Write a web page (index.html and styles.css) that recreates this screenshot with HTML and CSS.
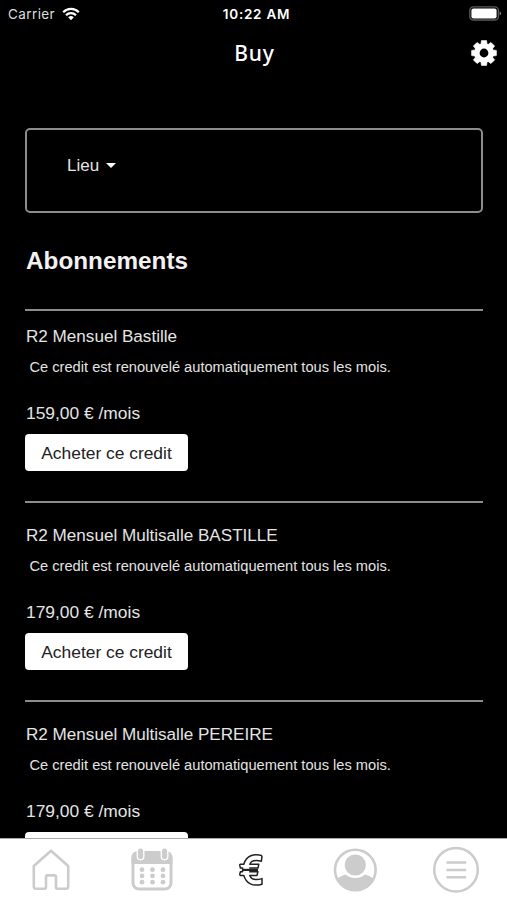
FILE: index.html
```
<!DOCTYPE html>
<html lang="fr">
<head>
<meta charset="utf-8">
<title>Buy</title>
<link rel="stylesheet" href="styles.css">
</head>
<body>
<div class="status">
  <div class="carrier"><span>Carrier</span>
    <svg width="18" height="14" viewBox="0 0 18 14" fill="none" stroke="#fff" stroke-width="2.2"><path d="M1.2 5.2a11 11 0 0 1 15.6 0M4 8.2a7 7 0 0 1 10 0"/><path d="M9 13.2 6.2 10.3a4 4 0 0 1 5.6 0z" fill="#fff" stroke="none"/></svg>
  </div>
  <div class="time">10:22 AM</div>
  <svg class="battery" width="33" height="15" viewBox="0 0 33 15"><rect x=".8" y=".8" width="28.6" height="13.2" rx="3.6" fill="none" stroke="#5c5c5c" stroke-width="1.3"/><rect x="2.4" y="2.4" width="25.2" height="10" rx="2" fill="#fff"/><path d="M30.6 5.2q1.5.6 1.5 2.2t-1.5 2.2z" fill="#777"/></svg>
</div>
<header class="header">
  <span></span>
  <h1>Buy</h1>
  <svg class="gear" width="26" height="26" viewBox="-13 -13 26 26" fill="#fff">
    <defs><path id="tooth" d="M-3.2-8-2.6-12.4H2.600L3.200-8z" stroke="#fff" stroke-linejoin="round" stroke-width=".6"/></defs>
    <circle r="7.100" fill="none" stroke="#fff" stroke-width="5.400"/>
    <use href="#tooth"/><use href="#tooth" transform="rotate(45)"/><use href="#tooth" transform="rotate(90)"/><use href="#tooth" transform="rotate(135)"/><use href="#tooth" transform="rotate(180)"/><use href="#tooth" transform="rotate(225)"/><use href="#tooth" transform="rotate(270)"/><use href="#tooth" transform="rotate(315)"/>
  </svg>
</header>
<main class="content">
  <div class="filter"><span>Lieu</span><i class="caret"></i></div>
  <h2>Abonnements</h2>
  <section class="plan first">
    <h3>R2 Mensuel Bastille</h3>
    <p class="desc">Ce credit est renouvelé automatiquement tous les mois.</p>
    <p class="price">159,00 € /mois</p>
    <button>Acheter ce credit</button>
  </section>
  <section class="plan">
    <h3>R2 Mensuel Multisalle BASTILLE</h3>
    <p class="desc">Ce credit est renouvelé automatiquement tous les mois.</p>
    <p class="price">179,00 € /mois</p>
    <button>Acheter ce credit</button>
  </section>
  <section class="plan">
    <h3>R2 Mensuel Multisalle PEREIRE</h3>
    <p class="desc">Ce credit est renouvelé automatiquement tous les mois.</p>
    <p class="price">179,00 € /mois</p>
    <button aria-label="Acheter ce credit"></button>
  </section>
</main>
<nav class="tabs">
  <a><svg width="48" height="48" viewBox="0 0 48 48" fill="none" stroke="#ccc" stroke-width="2.6" stroke-linejoin="round"><path d="M24 4.8 6.8 20v20.500q0 2.200 2.200 2.200h8.600q1.400 0 1.400-1.400V31q0-1.600 1.600-1.600h6.800Q29 29.400 29 31v10.300q0 1.400 1.400 1.400H39q2.200 0 2.200-2.200V20z"/></svg></a>
  <a><svg width="48" height="48" viewBox="0 0 48 48"><rect x="5" y="6.500" width="38" height="36.500" rx="6" fill="none" stroke="#ccc" stroke-width="3"/><path d="M3.500 18v-6q0-7 7-7h27q7 0 7 7v6z" fill="#ccc"/><g fill="#ccc" stroke="#fff" stroke-width="1.300"><rect x="9.300" y="1.800" width="6.500" height="12" rx="3.200"/><rect x="33.300" y="1.800" width="6.500" height="12" rx="3.200"/></g><g fill="#ccc"><circle cx="14" cy="23.700" r="2.400"/><circle cx="24.500" cy="23.700" r="2.400"/><circle cx="35" cy="23.700" r="2.400"/><circle cx="14" cy="29.900" r="2.400"/><circle cx="24.500" cy="29.900" r="2.400"/><circle cx="35" cy="29.900" r="2.400"/><circle cx="14" cy="36.200" r="2.400"/><circle cx="24.500" cy="36.200" r="2.400"/><circle cx="35" cy="36.200" r="2.400"/></g></svg></a>
  <a><svg width="48" height="48" viewBox="0 0 48 48" fill="none" stroke="#222" stroke-width="1.500" stroke-linejoin="round"><path d="M33 9.600C25 7 17.200 9.800 14.800 18.200H11.600q-1 0-.8 1.200l.6 2.600h2.200v3.800h-2.200l-.6 2.400q-.1 1.200.8 1.200h3.200C17 37.500 24 40.800 33 38.200V32.600C27.500 34.200 22.500 34 20.800 29.400H28l.9-3.600H20.200"/><path d="M20.200 22H29l.8-3.800H20.800C22.500 13.800 26.500 13.800 32.400 15.200L33 9.600"/><path d="M13 23.900H29" stroke-width="2.200"/></svg></a>
  <a><svg width="48" height="48" viewBox="0 0 48 48"><circle cx="24.300" cy="24" r="20.300" fill="none" stroke="#ccc" stroke-width="2.600"/><circle cx="24.300" cy="19" r="10.600" fill="#ccc"/><path d="M6 33q2-2.500 8.500-4.500 4.200 3.500 9.800 3.500t9.800-3.500Q40.600 30.500 42.600 33 37 45 24.300 45T6 33z" fill="#ccc"/></svg></a>
  <a><svg width="48" height="48" viewBox="0 0 48 48" fill="none" stroke="#ccc" stroke-width="2.500"><circle cx="24" cy="23.800" r="21.800"/><path d="M14.500 16.600h19.700M14.500 24h19.700M14.500 31.200h19.700"/></svg></a>
</nav>
</body>
</html>
```
FILE: styles.css
```
* { box-sizing: border-box; margin: 0; padding: 0; }
body {
  width: 507px; height: 900px; overflow: hidden;
  display: flex; flex-direction: column;
  background: #000; color: #e4e4e4;
  font-family: "Liberation Sans", Arial, sans-serif;
}
.status, .header {
  display: grid; grid-template-columns: 1fr auto 1fr;
  align-items: center; flex: none;
}
.status { height: 27px; padding: 0 6px 0 8px; font: 13.5px/16px Inter, sans-serif; color: #fff; }
.carrier { display: flex; align-items: center; gap: 7px; color: #ddd; letter-spacing: .4px; }
.time { font-weight: 600; font-size: 13.5px; letter-spacing: .75px; margin-left: 4px; }
.battery { justify-self: end; margin-right: -1px; }
.header { height: 51px; padding: 0 10px 0 12px; color: #fff; }
.header h1 { font: 500 21px/26px "Noto Sans", sans-serif; letter-spacing: .8px; }
.gear { justify-self: end; }
.content { flex: 1; min-height: 0; overflow: hidden; padding: 50px 24px 0 25px; }
.filter {
  height: 85px; border: 2px solid #8c8c8c; border-radius: 5px;
  display: flex; align-items: flex-start; gap: 7px;
  padding: 26px 40px; font-size: 17px; line-height: 20px;
}
.caret { margin-top: 7px; border: 5px solid transparent; border-top-color: #fff; border-bottom: 0; }
h2 { font-size: 24.3px; line-height: 30px; margin: 33px 0 33px; color: #f2f2f2; padding-left: 1px; }
.plan { height: 199px; border-top: 2px solid #8c8c8c; padding-top: 23px; }
.plan.first { height: 192px; padding-top: 16px; }
.plan h3 { font-weight: 400; font-size: 17.1px; line-height: 20px; padding-left: 1px; }
.desc { font-size: 14.65px; line-height: 18px; margin-top: 11px; padding-left: 4.5px; }
.price { font-size: 17.4px; line-height: 20px; margin-top: 27px; padding-left: 1px; }
button {
  display: block; width: 163px; height: 37px; margin-top: 11px;
  border: 0; border-radius: 4px; background: #fff; color: #222;
  font: 17.4px/38px "Liberation Sans", Arial, sans-serif; white-space: nowrap;
}
.tabs {
  flex: none; height: 62px; background: #fff; border-top: 1px solid #aaa;
  display: grid; grid-template-columns: repeat(5, 1fr);
  align-items: center; justify-items: center;
}
.tabs svg { display: block; }
```
